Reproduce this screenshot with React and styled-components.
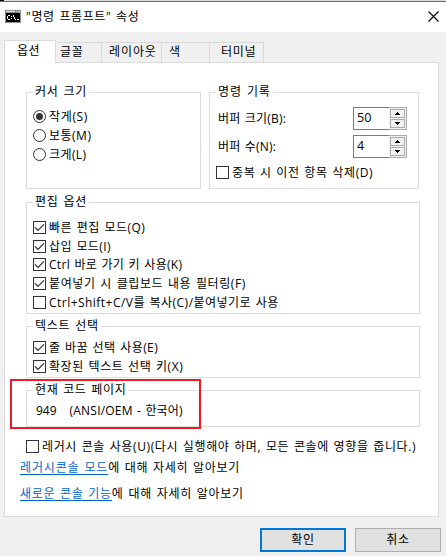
import React from "react";
import styled, { createGlobalStyle } from "styled-components";

const GlobalStyle = createGlobalStyle`
  * {
    box-sizing: border-box;
  }
  body {
    margin: 0;
    background: #f0f0f0;
    color: #000;
    font-family: "Open Sans", "Noto Sans CJK KR", sans-serif;
    font-size: 12px;
    line-height: 19px;
  }
`;

const Dialog = styled.div`
  position: relative;
  width: 446px;
  height: 556px;
  overflow: hidden;
  background: #f0f0f0;
`;

const TopEdge = styled.div`
  height: 2px;
  background: linear-gradient(90deg, #000 4px, #dcdcdc 4px);
  border-bottom: 1px solid #6b6b6b;
`;

const TitleBar = styled.div`
  display: flex;
  align-items: center;
  height: 30px;
  padding: 0 7px 2px 5px;
  background: #fff;
`;

const Title = styled.div`
  flex: 1;
  margin-left: 5px;
`;

const Text = styled.span`
  display: inline-block;
  white-space: pre;
  letter-spacing: ${(props) => props.$ls || 0}px;
  word-spacing: 1px;
`;

const Tabs = styled.div`
  display: flex;
  align-items: flex-end;
  height: 30px;
  padding-left: 4px;
`;

const Tab = styled.div`
  width: ${(props) => props.$w}px;
  height: ${(props) => (props.$active ? 23 : 20)}px;
  padding-left: ${(props) => props.$pad}px;
  border: 1px solid #dadada;
  border-left-width: ${(props) => (props.$active ? 1 : 0)}px;
  border-bottom: 0;
  background: ${(props) => (props.$active ? "#fff" : "#f0f0f0")};
  line-height: ${(props) => (props.$active ? 20 : 18)}px;
  ${(props) => props.$active && "margin-bottom: -1px; z-index: 1;"}
`;

const Panel = styled.div`
  width: 435px;
  height: 455px;
  margin-left: 4px;
  padding: 29px 0 0 21px;
  border: 1px solid #dadada;
  background: #fff;
`;

const Columns = styled.div`
  display: flex;
  gap: 8px;
`;

const Group = styled.div`
  width: ${(props) => props.$w || 394}px;
  height: ${(props) => props.$h}px;
  margin-bottom: ${(props) => props.$gap || 12}px;
  padding-left: 6px;
  border: 1px solid #dcdcdc;
`;

const Legend = styled.div`
  width: fit-content;
  height: 16px;
  margin: -9px 0 ${(props) => props.$gap}px;
  padding: 0 2px;
  background: #fff;
  letter-spacing: ${(props) => props.$ls || 0.75}px;
  line-height: 16px;
  word-spacing: 1px;
`;

const Row = styled.label`
  display: flex;
  align-items: flex-start;
  height: ${(props) => props.$h || 19}px;
`;

const Box = styled.span`
  display: flex;
  flex: none;
  width: 13px;
  height: 13px;
  margin: 3px 3px 0 0;
  border: 1px solid #333;
`;

const Circle = styled(Box)`
  align-items: center;
  justify-content: center;
  border-radius: 50%;
`;

const Dot = styled.span`
  width: 7px;
  height: 7px;
  border-radius: 50%;
  background: #333;
`;

const Field = styled.div`
  display: flex;
  align-items: center;
  justify-content: space-between;
  height: 23px;
  margin: 0 11px 5px 2px;
`;

const Spinner = styled.div`
  display: flex;
  width: 54px;
  height: 23px;
  border: 1px solid #acacac;
`;

const Value = styled.div`
  width: 36px;
  margin: -1px 0 -1px -1px;
  padding-left: 3px;
  border: 1px solid #7a7a7a;
  border-right: 0;
  font-size: 12.5px;
  line-height: 20px;
`;

const Steps = styled.div`
  display: flex;
  flex: 1;
  flex-direction: column;
  gap: 1px;
  padding: 1px;
  background: #f0f0f0;
`;

const Step = styled.div`
  display: flex;
  align-items: center;
  justify-content: center;
  height: 9px;
  border: 1px solid #acacac;
`;

const CodePage = styled.div`
  display: flex;
  gap: 13px;
  padding-left: 3px;
`;

const Marker = styled.div`
  position: absolute;
  left: 10px;
  top: 379px;
  width: 191px;
  height: 50px;
  border: 2px solid #ed1c24;
`;

const Info = styled.div`
  display: flex;
  margin: ${(props) => props.$top}px 0 0 -6px;
`;

const Link = styled.a`
  height: 17px;
  border-bottom: 1px solid #0066cc;
  color: #0066cc;
  letter-spacing: ${(props) => props.$ls}px;
  white-space: nowrap;
  word-spacing: 1px;
`;

const Buttons = styled.div`
  display: flex;
  justify-content: flex-end;
  gap: 9px;
  padding: 11px 5px 0 0;
`;

const Button = styled.button`
  width: 86px;
  height: 24px;
  padding: 0;
  border: ${(props) => (props.$primary ? "2px solid #0078d7" : "1px solid #adadad")};
  background: #e1e1e1;
  color: #000;
  font: inherit;
  letter-spacing: 0.7px;
  line-height: 18px;
`;

function ConsoleIcon() {
  return (
    <svg width="16" height="13" viewBox="0 0 16 13" shapeRendering="crispEdges">
      <path fill="#8c8f94" d="M0 0h16v13H0z" />
      <path fill="#d5dce2" d="M1 1h14v1H1z" />
      <path fill="#5b6f85" d="M10 1h1v1h-1zM12 1h1v1h-1z" />
      <path fill="#000" d="M1 3h14v9H1z" />
      <path
        fill="#fff"
        d="M3 5h2v1H3zM2 6h1v3H2zM3 9h2v1H3zM6 6h1v1H6zM6 8h1v1H6zM8 5h1v2H8zM9 7h1v2H9zM10 9h1v1h-1zM12 9h2v1h-2z"
      />
    </svg>
  );
}

function CloseIcon() {
  return (
    <svg width="11" height="11" viewBox="0 0 11 11">
      <path d="M.5.5l10 10M10.5.5l-10 10" stroke="#000" strokeWidth="1.1" />
    </svg>
  );
}

function Check({ on, h, ls, children }) {
  return (
    <Row $h={h}>
      <Box>
        {on && (
          <svg width="11" height="11" viewBox="0 0 11 11">
            <path d="M1 5.4l3 3L10 2.4" fill="none" stroke="#333" strokeWidth="1.3" />
          </svg>
        )}
      </Box>
      <Text $ls={ls}>{children}</Text>
    </Row>
  );
}

function Radio({ on, ls, children }) {
  return (
    <Row>
      <Circle>{on && <Dot />}</Circle>
      <Text $ls={ls}>{children}</Text>
    </Row>
  );
}

function NumberField({ label, value }) {
  return (
    <Field>
      <Text $ls={0.2}>{label}</Text>
      <Spinner>
        <Value>{value}</Value>
        <Steps>
          <Step>
            <svg width="5" height="3" shapeRendering="crispEdges">
              <path d="M2 0h1v1h1v1h1v1H0V2h1V1h1z" />
            </svg>
          </Step>
          <Step>
            <svg width="5" height="3" shapeRendering="crispEdges">
              <path d="M0 0h5v1H4v1H3v1H2V2H1V1H0z" />
            </svg>
          </Step>
        </Steps>
      </Spinner>
    </Field>
  );
}

function App() {
  return (
    <Dialog>
      <GlobalStyle />
      <TopEdge />
      <TitleBar>
        <ConsoleIcon />
        <Title>
          <Text $ls={0.6}>"명령 프롬프트" 속성</Text>
        </Title>
        <CloseIcon />
      </TitleBar>
      <Tabs>
        <Tab $active $w={52} $pad={12}>
          <Text $ls={0.5}>옵션</Text>
        </Tab>
        <Tab $w={46} $pad={4}>
          <Text $ls={0.8}>글꼴</Text>
        </Tab>
        <Tab $w={60} $pad={7}>
          <Text $ls={0.9}>레이아웃</Text>
        </Tab>
        <Tab $w={48} $pad={7}>
          <Text>색</Text>
        </Tab>
        <Tab $w={54} $pad={11}>
          <Text $ls={0.7}>터미널</Text>
        </Tab>
      </Tabs>
      <Panel>
        <Columns>
          <Group $w={175} $h={97} $gap={13}>
            <Legend $gap={7}>커서 크기</Legend>
            <Radio on ls={0.65}>작게(S)</Radio>
            <Radio ls={0.5}>보통(M)</Radio>
            <Radio ls={0.4}>크게(L)</Radio>
          </Group>
          <Group $w={210} $h={97} $gap={13}>
            <Legend $gap={7} $ls={0.9}>명령 기록</Legend>
            <NumberField label="버퍼 크기(B):" value="50" />
            <NumberField label="버퍼 수(N):" value="4" />
            <Check ls={0.6}>중복 시 이전 항목 삭제(D)</Check>
          </Group>
        </Columns>
        <Group $h={112}>
          <Legend $gap={8}>편집 옵션</Legend>
          <Check on ls={0.5}>빠른 편집 모드(Q)</Check>
          <Check on h={18} ls={0.4}>삽입 모드(I)</Check>
          <Check on ls={0.3}>Ctrl 바로 가기 키 사용(K)</Check>
          <Check on ls={0.6}>붙여넣기 시 클립보드 내용 필터링(F)</Check>
          <Check ls={0.47}>Ctrl+Shift+C/V를 복사(C)/붙여넣기로 사용</Check>
        </Group>
        <Group $h={52}>
          <Legend $gap={4}>텍스트 선택</Legend>
          <Check on ls={0.45}>줄 바꿈 선택 사용(E)</Check>
          <Check on ls={0.57}>확장된 텍스트 선택 키(X)</Check>
        </Group>
        <Group $h={37} $gap={10}>
          <Legend $gap={3} $ls={0.65}>현재 코드 페이지</Legend>
          <CodePage>
            <Text>949</Text>
            <Text $ls={0.2}>(ANSI/OEM - 한국어)</Text>
          </CodePage>
        </Group>
        <Check ls={0.61}>레거시 콘솔 사용(U)(다시 실행해야 하며, 모든 콘솔에 영향을 줍니다.)</Check>
        <Info $top={2}>
          <Link $ls={0.85}>레거시콘솔 모드</Link>
          <Text $ls={0.7}>에 대해 자세히 알아보기</Text>
        </Info>
        <Info $top={7}>
          <Link $ls={0.7}>새로운 콘솔 기능</Link>
          <Text $ls={0.7}>에 대해 자세히 알아보기</Text>
        </Info>
      </Panel>
      <Buttons>
        <Button $primary>확인</Button>
        <Button>취소</Button>
      </Buttons>
      <Marker />
    </Dialog>
  );
}

export default App;
